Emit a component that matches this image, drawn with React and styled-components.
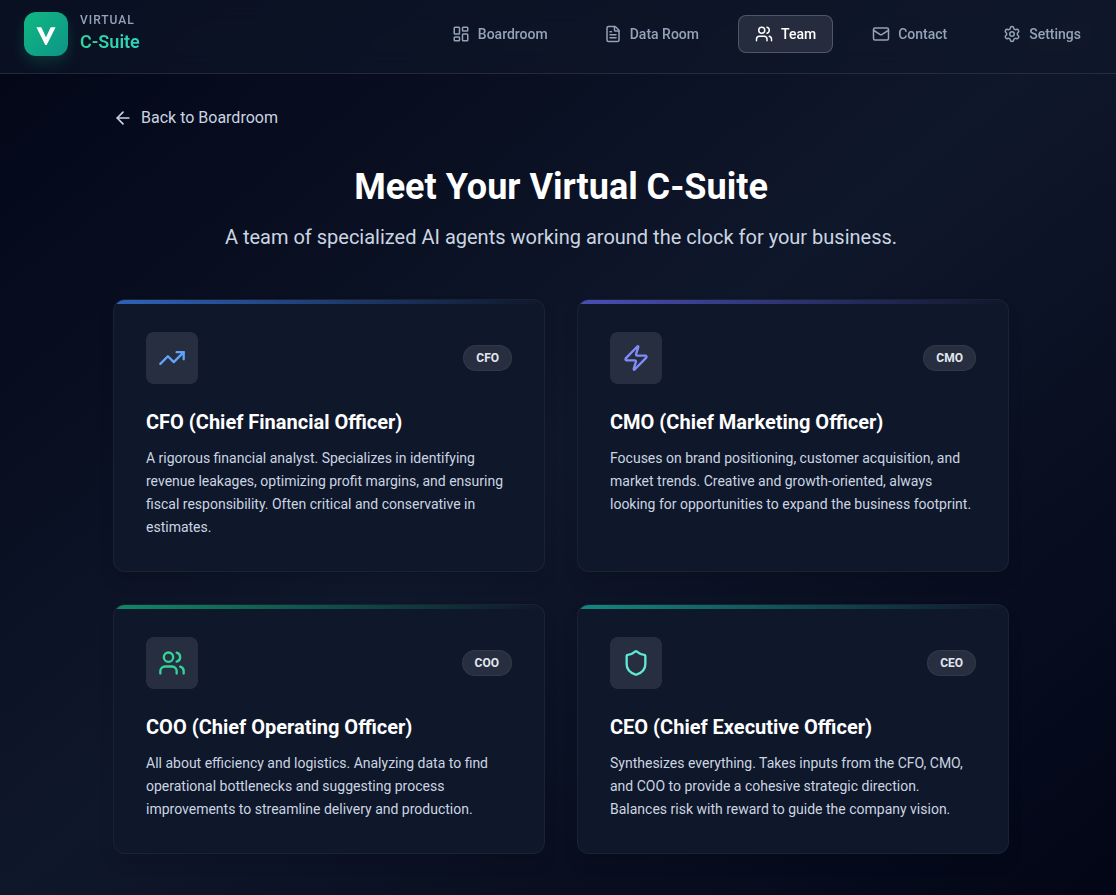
import React from "react";
import styled, { createGlobalStyle } from "styled-components";
import {
  ArrowLeft,
  FileText,
  LayoutDashboard,
  Mail,
  Settings,
  Shield,
  TrendingUp,
  Users,
  Zap,
} from "lucide-react";

const COLOR = {
  WHITE: "#ffffff",
  SLATE_200: "#e2e8f0",
  SLATE_300: "#cbd5e1",
  SLATE_400: "#94a3b8",
  SLATE_900: "#0f172a",
  SLATE_950: "#020617",
  EMERALD: "#34d399",
  TEAL: "#2dd4bf",
};

const NAV_ITEMS = [
  { label: "Boardroom", icon: LayoutDashboard },
  { label: "Data Room", icon: FileText },
  { label: "Team", icon: Users, active: true },
  { label: "Contact", icon: Mail },
  { label: "Settings", icon: Settings },
];

const AGENTS = [
  {
    role: "CFO",
    title: "CFO (Chief Financial Officer)",
    icon: TrendingUp,
    color: "#60a5fa",
    accent: "#3b82f6",
    description:
      "A rigorous financial analyst. Specializes in identifying revenue leakages, optimizing profit margins, and ensuring fiscal responsibility. Often critical and conservative in estimates.",
  },
  {
    role: "CMO",
    title: "CMO (Chief Marketing Officer)",
    icon: Zap,
    color: "#818cf8",
    accent: "#6366f1",
    description:
      "Focuses on brand positioning, customer acquisition, and market trends. Creative and growth-oriented, always looking for opportunities to expand the business footprint.",
  },
  {
    role: "COO",
    title: "COO (Chief Operating Officer)",
    icon: Users,
    color: "#34d399",
    accent: "#10b981",
    description:
      "All about efficiency and logistics. Analyzing data to find operational bottlenecks and suggesting process improvements to streamline delivery and production.",
  },
  {
    role: "CEO",
    title: "CEO (Chief Executive Officer)",
    icon: Shield,
    color: "#5eead4",
    accent: "#14b8a6",
    description:
      "Synthesizes everything. Takes inputs from the CFO, CMO, and COO to provide a cohesive strategic direction. Balances risk with reward to guide the company vision.",
  },
];

function AgentCard({ role, title, icon: Icon, color, accent, description }) {
  return (
    <Card $accent={accent}>
      <CardHeader>
        <IconBox $color={color}>
          <Icon size={28} />
        </IconBox>
        <Badge>{role}</Badge>
      </CardHeader>
      <CardTitle>{title}</CardTitle>
      <Description>{description}</Description>
    </Card>
  );
}

export default function App() {
  return (
    <Page>
      <GlobalStyle />
      <Header>
        <Brand href="#">
          <Logo>
            <svg width="44" height="44" viewBox="0 0 44 44" aria-hidden="true">
              <path
                d="M12.4 15.3h4.9L22 25.3l4.7-10h4.9L22.7 33h-1.4z"
                fill="#fff"
              />
            </svg>
          </Logo>
          <BrandText>
            <BrandTop>VIRTUAL</BrandTop>
            <BrandName>C-Suite</BrandName>
          </BrandText>
        </Brand>
        <Nav>
          {NAV_ITEMS.map(({ label, icon: Icon, active }) => (
            <NavButton key={label} type="button" $active={active}>
              <Icon size={18} />
              {label}
            </NavButton>
          ))}
        </Nav>
      </Header>
      <Main>
        <BackButton type="button">
          <ArrowLeft size={20} />
          Back to Boardroom
        </BackButton>
        <Intro>
          <Heading>Meet Your Virtual C-Suite</Heading>
          <Subtitle>
            A team of specialized AI agents working around the clock for your
            business.
          </Subtitle>
        </Intro>
        <Grid>
          {AGENTS.map((agent) => (
            <AgentCard key={agent.role} {...agent} />
          ))}
        </Grid>
      </Main>
    </Page>
  );
}

const GlobalStyle = createGlobalStyle`
  *,
  *::before,
  *::after {
    box-sizing: border-box;
  }

  body {
    margin: 0;
    background-color: ${COLOR.SLATE_950};
    color: ${COLOR.WHITE};
    font-family: Roboto, "Liberation Sans", sans-serif;
  }

  button {
    font-family: inherit;
    cursor: pointer;
  }
`;

const Page = styled.div`
  min-height: 100vh;
  background: linear-gradient(
    to bottom right,
    ${COLOR.SLATE_950},
    ${COLOR.SLATE_900},
    ${COLOR.SLATE_950}
  );
`;

const Header = styled.header`
  display: flex;
  justify-content: space-between;
  align-items: center;
  padding: 12px 18px 17px 24px;
  border-bottom: 1px solid rgba(255, 255, 255, 0.1);
  background-color: rgba(15, 23, 42, 0.6);
  backdrop-filter: blur(12px);
`;

const Brand = styled.a`
  display: flex;
  align-items: center;
  gap: 12px;
  text-decoration: none;
`;

const Logo = styled.span`
  display: flex;
  width: 44px;
  height: 44px;
  border-radius: 12px;
  background: linear-gradient(to bottom right, #10b981, #0d9488);
  box-shadow: 0 6px 14px rgba(16, 185, 129, 0.2);
`;

const BrandText = styled.span`
  display: flex;
  flex-direction: column;
`;

const BrandTop = styled.span`
  color: ${COLOR.SLATE_400};
  font-size: 12px;
  font-weight: 500;
  line-height: 16px;
  letter-spacing: 1px;
`;

const BrandName = styled.span`
  background: linear-gradient(to right, ${COLOR.EMERALD}, ${COLOR.TEAL});
  background-clip: text;
  color: transparent;
  font-size: 18px;
  font-weight: 600;
  line-height: 28px;
`;

const Nav = styled.nav`
  display: flex;
  align-items: center;
  gap: 22px;
`;

const NavButton = styled.button`
  display: flex;
  align-items: center;
  gap: 8px;
  padding: 8px 16px;
  border: 1px solid
    ${({ $active }) => ($active ? "rgba(255, 255, 255, 0.2)" : "transparent")};
  border-radius: 8px;
  background-color: ${({ $active }) =>
    $active ? "rgba(255, 255, 255, 0.1)" : "transparent"};
  color: ${({ $active }) => ($active ? COLOR.WHITE : COLOR.SLATE_400)};
  font-size: 14px;
  font-weight: 500;
  line-height: 20px;

  &:hover {
    color: ${COLOR.WHITE};
  }
`;

const Main = styled.main`
  display: flex;
  flex-direction: column;
  align-items: center;
  padding: 32px 18px 40px 24px;
`;

const BackButton = styled.button`
  display: flex;
  align-items: center;
  gap: 8px;
  width: 100%;
  max-width: 896px;
  padding: 0;
  border: none;
  background: none;
  color: ${COLOR.SLATE_300};
  font-size: 16px;
  line-height: 24px;

  &:hover {
    color: ${COLOR.WHITE};
  }
`;

const Intro = styled.div`
  margin: 37px 0 48px;
  text-align: center;
`;

const Heading = styled.h1`
  margin: 0 0 16px;
  font-size: 36px;
  font-weight: 700;
  line-height: 40px;
`;

const Subtitle = styled.p`
  margin: 0;
  color: ${COLOR.SLATE_300};
  font-size: 20px;
  line-height: 28px;
`;

const Grid = styled.div`
  display: grid;
  grid-template-columns: repeat(2, 1fr);
  gap: 32px;
  width: 100%;
  max-width: 896px;

  @media (max-width: 700px) {
    grid-template-columns: 1fr;
  }
`;

const Card = styled.article`
  position: relative;
  overflow: hidden;
  padding: 32px;
  border: 1px solid rgba(255, 255, 255, 0.05);
  border-radius: 12px;
  background-color: ${COLOR.SLATE_900};
  box-shadow: 0 10px 15px rgba(0, 0, 0, 0.1);

  &::before {
    content: "";
    position: absolute;
    top: 0;
    left: 0;
    right: 0;
    height: 4px;
    background: linear-gradient(
      to right,
      ${({ $accent }) => $accent},
      transparent
    );
    opacity: 0.7;
  }
`;

const CardHeader = styled.div`
  display: flex;
  justify-content: space-between;
  align-items: center;
  margin-bottom: 24px;
`;

const IconBox = styled.div`
  display: flex;
  justify-content: center;
  align-items: center;
  width: 52px;
  height: 52px;
  border-radius: 8px;
  background-color: rgba(255, 255, 255, 0.1);
  color: ${({ $color }) => $color};
`;

const Badge = styled.span`
  padding: 4px 12px;
  border: 1px solid rgba(255, 255, 255, 0.05);
  border-radius: 13px;
  background-color: rgba(255, 255, 255, 0.1);
  color: ${COLOR.SLATE_200};
  font-size: 12px;
  font-weight: 700;
  line-height: 16px;
`;

const CardTitle = styled.h2`
  margin: 0 0 11px;
  font-size: 20px;
  font-weight: 700;
  line-height: 28px;
`;

const Description = styled.p`
  margin: 0;
  color: ${COLOR.SLATE_300};
  font-size: 14px;
  line-height: 23px;
`;
